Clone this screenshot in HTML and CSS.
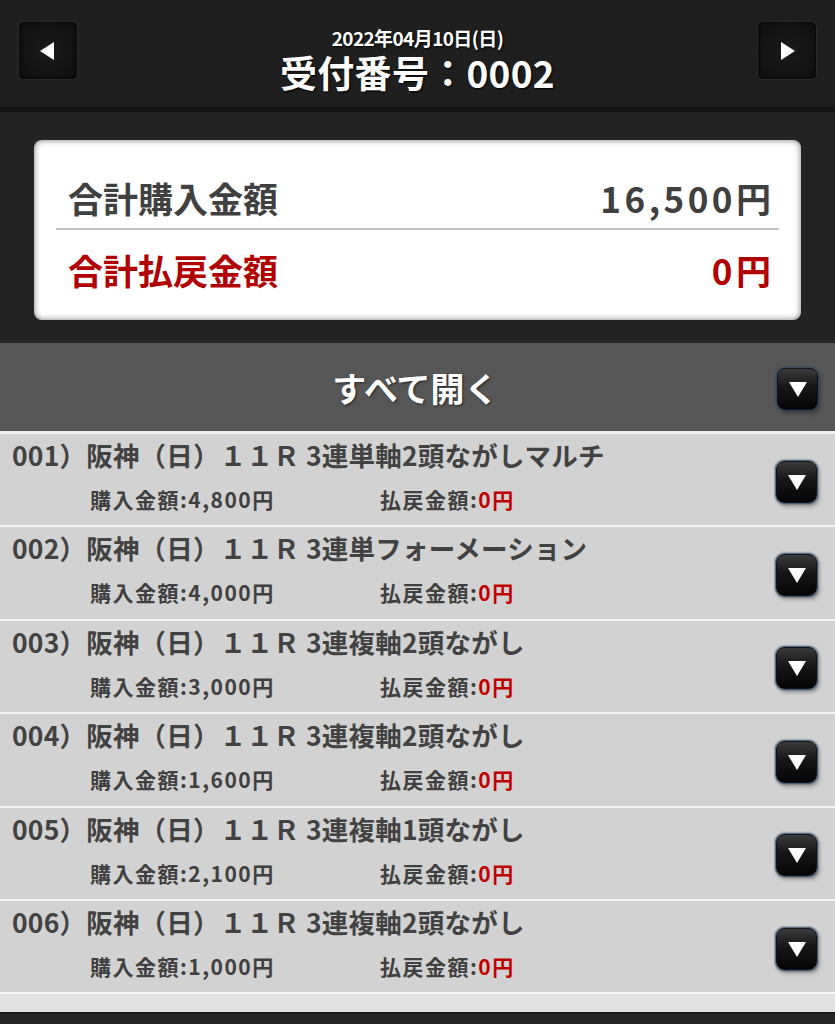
FILE: index.html
```html
<!DOCTYPE html>
<html lang="ja">
<head>
<meta charset="utf-8">
<title>受付番号：0002</title>
<link rel="stylesheet" href="styles.css">
</head>
<body>
<header class="topbar">
  <button class="navbtn" aria-label="前へ">
    <svg width="20" height="22" viewBox="0 0 20 22"><path d="M2 11 L16 2 L16 20 Z" fill="#fff"/></svg>
  </button>
  <div class="title">
    <div class="date">2022年04月10日(日)</div>
    <div class="receipt">受付番号：0002</div>
  </div>
  <button class="navbtn" aria-label="次へ">
    <svg width="20" height="22" viewBox="0 0 20 22"><path d="M18 11 L4 2 L4 20 Z" fill="#fff"/></svg>
  </button>
</header>

<section class="summary">
  <div class="card">
    <div class="sumrow total">
      <span>合計購入金額</span><span class="val">16,500円</span>
    </div>
    <div class="sumrow refund">
      <span>合計払戻金額</span><span class="val">0円</span>
    </div>
  </div>
</section>

<div class="openall">
  <span class="openall-label">すべて開く</span>
  <span class="dbtn"><svg width="22" height="20" viewBox="0 0 22 20"><path d="M2 3 L20 3 L11 18 Z" fill="#fff"/></svg></span>
</div>

<ul class="list">
  <li class="item">
    <div class="info">
      <div class="name">001）阪神（日）１１Ｒ 3連単軸2頭ながしマルチ</div>
      <div class="amounts"><span>購入金額:4,800円</span><span>払戻金額:<em>0円</em></span></div>
    </div>
    <span class="dbtn"><svg width="22" height="20" viewBox="0 0 22 20"><path d="M2 3 L20 3 L11 18 Z" fill="#fff"/></svg></span>
  </li>
  <li class="item">
    <div class="info">
      <div class="name">002）阪神（日）１１Ｒ 3連単フォーメーション</div>
      <div class="amounts"><span>購入金額:4,000円</span><span>払戻金額:<em>0円</em></span></div>
    </div>
    <span class="dbtn"><svg width="22" height="20" viewBox="0 0 22 20"><path d="M2 3 L20 3 L11 18 Z" fill="#fff"/></svg></span>
  </li>
  <li class="item">
    <div class="info">
      <div class="name">003）阪神（日）１１Ｒ 3連複軸2頭ながし</div>
      <div class="amounts"><span>購入金額:3,000円</span><span>払戻金額:<em>0円</em></span></div>
    </div>
    <span class="dbtn"><svg width="22" height="20" viewBox="0 0 22 20"><path d="M2 3 L20 3 L11 18 Z" fill="#fff"/></svg></span>
  </li>
  <li class="item">
    <div class="info">
      <div class="name">004）阪神（日）１１Ｒ 3連複軸2頭ながし</div>
      <div class="amounts"><span>購入金額:1,600円</span><span>払戻金額:<em>0円</em></span></div>
    </div>
    <span class="dbtn"><svg width="22" height="20" viewBox="0 0 22 20"><path d="M2 3 L20 3 L11 18 Z" fill="#fff"/></svg></span>
  </li>
  <li class="item">
    <div class="info">
      <div class="name">005）阪神（日）１１Ｒ 3連複軸1頭ながし</div>
      <div class="amounts"><span>購入金額:2,100円</span><span>払戻金額:<em>0円</em></span></div>
    </div>
    <span class="dbtn"><svg width="22" height="20" viewBox="0 0 22 20"><path d="M2 3 L20 3 L11 18 Z" fill="#fff"/></svg></span>
  </li>
  <li class="item">
    <div class="info">
      <div class="name">006）阪神（日）１１Ｒ 3連複軸2頭ながし</div>
      <div class="amounts"><span>購入金額:1,000円</span><span>払戻金額:<em>0円</em></span></div>
    </div>
    <span class="dbtn"><svg width="22" height="20" viewBox="0 0 22 20"><path d="M2 3 L20 3 L11 18 Z" fill="#fff"/></svg></span>
  </li>
</ul>

<div class="listend"></div>
<footer class="bottombar"></footer>
</body>
</html>
```

FILE: styles.css
```css
* { box-sizing: border-box; }

html, body {
  margin: 0;
  padding: 0;
}

body {
  background: #232323;
  font-family: "Noto Sans CJK JP", "Noto Sans", sans-serif;
  font-weight: 700;
  color: #404040;
}

.topbar {
  height: 112px;
  background: #1f1f1f;
  border-bottom: 5px solid #141414;
  display: flex;
  align-items: flex-start;
  justify-content: space-between;
  padding: 21px 18px 0 18px;
}

.navbtn {
  width: 60px;
  height: 59px;
  border: 1px solid #2a2a2a;
  border-radius: 6px;
  background: radial-gradient(ellipse at center, #1a1a1a 0%, #0e0e0e 100%);
  box-shadow: inset 0 0 4px rgba(0,0,0,0.8);
  display: flex;
  align-items: center;
  justify-content: center;
  padding: 0;
}

.title {
  display: flex;
  flex-direction: column;
  align-items: center;
  color: #fff;
  text-shadow: 1px 1px 2px #000;
  margin-top: 7px;
}

.date {
  font-size: 19px;
  line-height: 20px;
  letter-spacing: -0.6px;
}

.receipt {
  font-size: 37px;
  line-height: 40px;
  margin-top: 4px;
  letter-spacing: 0.3px;
}

.summary {
  padding: 28px 34px 23px 34px;
}

.card {
  height: 180px;
  background: #fff;
  border-radius: 8px;
  box-shadow: inset 0 0 6px rgba(0,0,0,0.55);
  padding: 0 22px;
  display: flex;
  flex-direction: column;
}

.sumrow {
  display: flex;
  justify-content: space-between;
  align-items: center;
  padding: 0 8px 0 12px;
  font-size: 35px;
  line-height: 40px;
  color: #404040;
}

.sumrow .val {
  letter-spacing: 3.5px;
  margin-right: -3.5px;
}

.sumrow.total {
  height: 90px;
  border-bottom: 2px solid #c4c4c4;
  padding-top: 28px;
}

.sumrow.refund {
  height: 90px;
  color: #b20000;
  padding-bottom: 10px;
}

.openall {
  height: 91px;
  background: #565656;
  border-bottom: 3px solid #efefef;
  display: flex;
  align-items: center;
  justify-content: center;
  position: relative;
}

.openall-label {
  color: #fff;
  font-size: 34px;
  text-shadow: 1px 1px 2px #222;
  margin-right: 4px;
}

.openall .dbtn {
  position: absolute;
  right: 17px;
  top: 25px;
}

.dbtn {
  width: 41px;
  height: 42px;
  border-radius: 8px;
  background: linear-gradient(#3a3a3a 0%, #161616 45%, #050505 100%);
  border: 1px solid #0a1420;
  box-shadow: 0 0 2px 1px #2d4660, 2px 3px 4px rgba(0,0,0,0.35);
  display: flex;
  align-items: center;
  justify-content: center;
  flex: none;
}

.list {
  list-style: none;
  margin: 0;
  padding: 0;
}

.item {
  height: 93.4px;
  background: #d2d2d2;
  border-bottom: 2px solid #f4f4f4;
  display: flex;
  align-items: center;
  padding: 0 18px 0 12px;
}

.info {
  flex: 1;
  align-self: flex-start;
  padding-top: 6px;
}

.name {
  font-size: 26.5px;
  line-height: 30px;
  color: #424242;
  white-space: nowrap;
  letter-spacing: 0.2px;
}

.amounts {
  display: grid;
  grid-template-columns: 290px auto;
  padding-left: 78px;
  margin-top: 16px;
  font-size: 21px;
  line-height: 26px;
  color: #404040;
  letter-spacing: 1.5px;
}

.amounts em {
  font-style: normal;
  color: #c00000;
}

.item .dbtn {
  margin-top: 4px;
}

.listend {
  height: 18px;
  background: #e2e2e2;
}

.bottombar {
  height: 40px;
  background: #262626;
  border-top: 2px solid #1a1a1a;
}
```
